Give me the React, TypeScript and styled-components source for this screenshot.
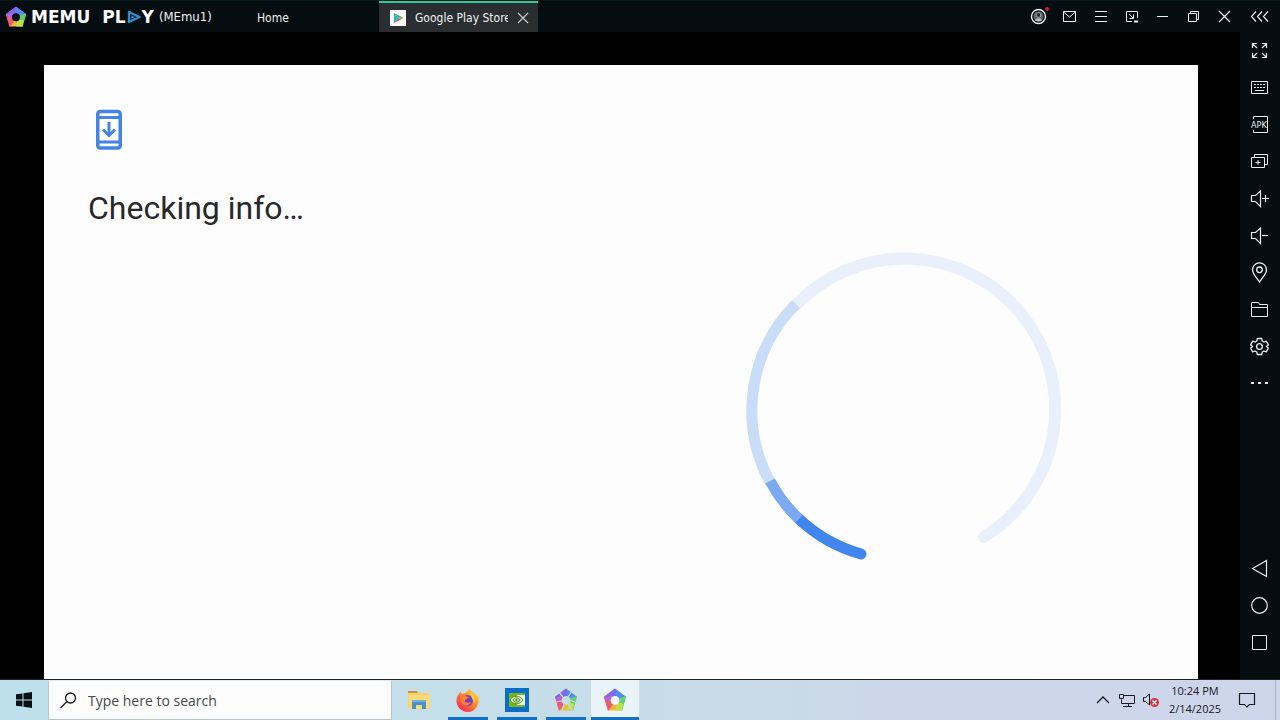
import React from "react";
import styled, { createGlobalStyle } from "styled-components";

const ui = '"DejaVu Sans Condensed", "DejaVu Sans", sans-serif';
const win = '"Open Sans", "Noto Sans", sans-serif';

const GlobalStyle = createGlobalStyle`
  *, *::before, *::after { box-sizing: border-box; }
  body { margin: 0; background: #000; }
  button, input { font: inherit; color: inherit; border: 0; margin: 0; padding: 0; background: none; }
`;

const Desktop = styled.div`
  display: flex;
  flex-direction: column;
  min-height: 100vh;
  background: #000;
`;

const TitleBar = styled.header`
  display: flex;
  align-items: stretch;
  height: 32px;
  background: #060d10;
  border-top: 1px solid #04191a;
  color: #eef1f2;
  font-family: ${ui};
  font-size: 12px;
`;

const Brand = styled.div`
  display: flex;
  align-items: center;
  width: 240px;
  padding-left: 5px;
`;

const WordMark = styled.div`
  display: flex;
  align-items: center;
  gap: 1px;
  margin: 0 5px 0 4px;
  color: #fff;
  font-family: "DejaVu Sans", sans-serif;
  font-size: 17px;
  font-weight: 700;
  line-height: 20px;
`;

const Word = styled.span<{ $gap?: number }>`
  margin-left: ${(p) => p.$gap ?? 0}px;
`;

const InstanceName = styled.span`
  font-size: 13px;
`;

const HomeTab = styled.button`
  width: 139px;
  padding: 2px 0 0 17px;
  text-align: left;
`;

const AppTab = styled.div`
  display: flex;
  align-items: center;
  width: 159px;
  padding-left: 11px;
  background: #2a2e30;
  border-top: 2px solid #2fc79c;
`;

const TabLabel = styled.button`
  flex: none;
  width: 93px;
  margin-left: 9px;
  overflow: hidden;
  white-space: nowrap;
  text-align: left;
`;

const TabClose = styled.button`
  display: flex;
  margin-left: 9px;
  color: #c9cdcf;
`;

const Controls = styled.div`
  display: flex;
  margin-left: auto;
`;

const ControlButton = styled.button<{ $wide?: boolean }>`
  display: flex;
  align-items: center;
  justify-content: center;
  width: ${(p) => (p.$wide ? 40 : 31)}px;
`;

const Workspace = styled.div`
  display: flex;
  flex: 1;
`;

const Stage = styled.main`
  display: flex;
  flex: 1;
  padding: 33px 42px 0 44px;
`;

const Screen = styled.section`
  display: flex;
  flex: 1;
  background: #fdfdfd;
`;

const Message = styled.div`
  flex: 1;
  padding: 44px 0 0 44px;
`;

const Heading = styled.h1`
  margin: 33px 0 0;
  color: #27282a;
  font-family: Roboto, sans-serif;
  font-size: 32px;
  font-weight: 400;
  line-height: 40px;
`;

const Progress = styled.div`
  display: flex;
  flex: 1;
  justify-content: center;
  padding: 186px 23px 0 0;
`;

const SideBar = styled.aside`
  display: flex;
  flex-direction: column;
  width: 40px;
  padding-bottom: 18px;
  background: #050c12;
  color: #e9edef;
`;

const SideButton = styled.button<{ $push?: boolean }>`
  display: flex;
  align-items: center;
  justify-content: center;
  height: 37px;
  margin-top: ${(p) => (p.$push ? "auto" : "0")};
`;

const TaskBar = styled.footer`
  display: flex;
  height: 41px;
  border-top: 1px solid #1c2226;
  background: linear-gradient(90deg, #bde0ec 0%, #c4dfe9 32%, #c9dbe8 55%, #cdd7ea 75%, #cdd5ea 100%);
  color: #16181c;
  font-family: ${win};
`;

const StartButton = styled.button`
  display: flex;
  align-items: center;
  justify-content: center;
  width: 48px;
`;

const SearchBox = styled.label`
  display: flex;
  align-items: center;
  width: 344px;
  padding-left: 11px;
  border: 1px solid #b9c4ca;
  border-top-color: #e4eaed;
  background: #fdfdfd;
`;

const SearchInput = styled.input`
  flex: 1;
  min-width: 0;
  margin-left: 11px;
  padding-top: 2px;
  outline: none;
  font-size: 14px;
  line-height: 20px;
  &::placeholder { color: #45484b; opacity: 1; }
`;

const TaskList = styled.nav`
  display: flex;
  gap: 1px;
  margin-left: 3px;
`;

const TaskButton = styled.button<{ $state?: "running" | "active" }>`
  display: flex;
  flex-direction: column;
  align-items: center;
  justify-content: space-between;
  width: 48px;
  padding-top: 8px;
  background: ${(p) => (p.$state === "active" ? "#eaf3f7" : "transparent")};
  &::after {
    content: "";
    width: ${(p) => (p.$state === "active" ? 48 : 40)}px;
    height: 3px;
    background: ${(p) => (p.$state ? "#0f70c6" : "transparent")};
  }
`;

const Tray = styled.div`
  display: flex;
  margin-left: auto;
`;

const TrayButton = styled.button<{ $wide?: boolean }>`
  display: flex;
  align-items: center;
  justify-content: center;
  width: ${(p) => (p.$wide ? 40 : 24)}px;
`;

const Clock = styled.button`
  width: 64px;
  padding-bottom: 1px;
  font-size: 11px;
  line-height: 18px;
  text-align: center;
`;

const ShowDesktop = styled.button`
  width: 5px;
  margin-left: 8px;
  border-left: 1px solid #a3afc2;
`;

const Line = styled.svg`
  display: block;
  flex: none;
  fill: none;
  stroke: currentColor;
  stroke-width: 1;
`;

type IconProps = { children: React.ReactNode };
const BarIcon = ({ children }: IconProps) => (
  <Line width="21" height="21" viewBox="0 1 21 21" aria-hidden="true">{children}</Line>
);
const SideIcon = ({ children }: IconProps) => (
  <Line width="20" height="21" viewBox="0 0 20 21" aria-hidden="true">{children}</Line>
);

const Pentagon = ({ size, hole, cut }: { size: number; hole: string; cut?: boolean }) => (
  <svg width={size} height={size} viewBox="0 0 24 24" aria-hidden="true">
    <g strokeWidth="1.6" strokeLinejoin="round">
      <path d="M12 12 12 1.5 22.2 9.2Z" fill="#4f8df0" stroke="#4f8df0" />
      <path d="M12 12 22.2 9.2 18.6 21.6Z" fill="#62cf72" stroke="#62cf72" />
      <path d="M12 12 18.6 21.6 5.4 21.6Z" fill="#f6b43c" stroke="#f6b43c" />
      <path d="M12 12 5.4 21.6 1.8 9.2Z" fill="#ee5a6e" stroke="#ee5a6e" />
      <path d="M12 12 1.8 9.2 12 1.5Z" fill="#8168e6" stroke="#8168e6" />
    </g>
    <path d="M12 22.4 18.6 22.4 20.5 16 15 14Z" fill="#bfe04c" />
    <path d="M1.2 10 9 7 7 14Z" fill="#b565dc" />
    {cut && (
      <path d="M4 3 9 9M1 14 8 13M8 23 10 16M18 23 14 15M23 15 16 12M18 3 14 9" stroke="#c4dfe9" strokeWidth="1.2" />
    )}
    <circle cx="12" cy="12.4" r="4.4" fill={hole} />
  </svg>
);

const Speaker = ({ plus }: { plus?: boolean }) => (
  <SideIcon>
    <path d="M1.5 7.5H5.5L10.5 3V18.5L5.5 13.5H1.5Z" strokeWidth="1.2" />
    <path d={plus ? "M12 10.5H19M15.5 7V14" : "M12 10.5H18"} strokeWidth="1.2" />
  </SideIcon>
);

const controls: [string, React.ReactNode][] = [
  ["Account", (
    <>
      <circle cx="10.5" cy="11.5" r="7" strokeWidth="1.4" />
      <circle cx="10.5" cy="11.5" r="5" fill="#5d6467" stroke="none" />
      <circle cx="10.5" cy="10" r="2.4" fill="#24292c" stroke="#b9bfc2" strokeWidth="0.8" />
      <path d="M6.5 15Q10.5 11.5 14.5 15Q10.5 18 6.5 15Z" fill="#b9bfc2" stroke="none" />
      <circle cx="19" cy="4" r="2" fill="#d8173f" stroke="none" />
    </>
  )],
  ["Messages", <><path d="M4.5 6.5H16.5V16.5H4.5Z" /><path d="M4.5 7 10.5 12 16.5 7" /></>],
  ["Menu", <path d="M5 6.5H17M5 11.5H17M5 16.5H17" />],
  ["Compact window", <><path d="M16.5 13V6.5H5.5V16.5H11" /><path d="M8 9 12 13M12.5 9.5V13.5H8.5" /><path d="M13 16.5H17" strokeWidth="2" /></>],
  ["Minimize", <path d="M5 11.5H16" />],
  ["Restore", <><path d="M5.5 8.5H13.5V16.5H5.5Z" /><path d="M7.5 8.5V6.5H15.5V14.5H13.5" /></>],
  ["Close", <path d="M5 6 16 17M16 6 5 17" strokeWidth="1.2" />],
];

const tools: [string, React.ReactNode][] = [
  ["Full screen", (
    <SideIcon>
      <path d="M2.5 8V3.5H7M2.5 3.5 7 8M12 3.5H16.5V8M16.5 3.5 12 8M2.5 13V17.5H7M2.5 17.5 7 13M16.5 13V17.5H12M16.5 17.5 12 13" strokeWidth="1.2" />
    </SideIcon>
  )],
  ["Keyboard", (
    <SideIcon>
      <path d="M1.5 4.5H17.5V16.5H1.5Z" />
      <path d="M4 7.5H16M4 10.5H16" strokeDasharray="2 1" />
      <path d="M5 13.5H14" />
    </SideIcon>
  )],
  ["Install APK", (
    <SideIcon>
      <path d="M3.5 5V2.5H17.5V18.5H3.5V16" />
      <text x="1" y="14" fontFamily="DejaVu Sans Condensed, sans-serif" fontSize="9" fill="currentColor" stroke="none">APK</text>
    </SideIcon>
  )],
  ["Multi-instance", (
    <SideIcon>
      <path d="M1.5 6.5H14.5V16.5H1.5Z" />
      <path d="M4.5 6.5V3.5H17.5V13.5H14.5" />
      <path d="M5.5 11.5H10.5M8 9V14" />
    </SideIcon>
  )],
  ["Volume up", <Speaker plus />],
  ["Volume down", <Speaker />],
  ["Location", (
    <SideIcon>
      <path d="M9.5 20C6.5 15.5 2.5 12 2.5 7.8A7 7 0 0 1 16.5 7.8C16.5 12 12.5 15.5 9.5 20Z" strokeWidth="1.3" />
      <circle cx="9.5" cy="7.8" r="2.8" strokeWidth="1.3" />
    </SideIcon>
  )],
  ["Shared folder", (
    <SideIcon><path d="M1.5 17.5V3.5H8.5L9.5 5.5H17.5V17.5ZM1.5 8.5H17.5" /></SideIcon>
  )],
  ["Settings", (
    <SideIcon>
      <path d="M7.3 2.5H11.7L12.2 5 13.9 6 16.3 5.2 18.4 8.8 16.5 10.5 18.4 12.2 16.3 15.8 13.9 15 12.2 16 11.7 18.5H7.3L6.8 16 5.1 15 2.7 15.8 0.6 12.2 2.5 10.5 0.6 8.8 2.7 5.2 5.1 6 6.8 5Z" strokeWidth="1.3" strokeLinejoin="round" />
      <circle cx="9.5" cy="10.5" r="2.9" strokeWidth="1.3" />
    </SideIcon>
  )],
  ["More", (
    <SideIcon><path d="M1 10H4M8 10H11M15 10H18" strokeWidth="2" /></SideIcon>
  )],
];

const navigation: [string, React.ReactNode][] = [
  ["Back", <path d="M2.5 10.5 16.5 2.5V18.5Z" strokeWidth="1.2" />],
  ["Home", <circle cx="9.5" cy="10.5" r="7.8" strokeWidth="1.2" />],
  ["Recent apps", <path d="M2.5 3.5H16.5V17.5H2.5Z" />],
];

const Spinner = () => (
  <svg width="320" height="316" viewBox="744 250 320 316" fill="none" strokeWidth="12" role="img" aria-label="Loading">
    <path d="M985 536A150.5 150.5 0 1 0 797 304" stroke="#e9f0fc" strokeLinecap="round" />
    <path d="M797 303A150.5 150.5 0 0 0 771 481" stroke="#c9ddf9" strokeWidth="11" />
    <path d="M862 553A150.5 150.5 0 0 1 799 517" stroke="#4285ee" strokeWidth="11" strokeLinecap="round" />
    <path d="M800 518A150.5 150.5 0 0 1 771 480" stroke="#7baaf3" strokeWidth="11" />
  </svg>
);

const PhoneUpdate = () => (
  <svg width="42" height="42" viewBox="0 0 42 42" fill="none" stroke="#4482e4" aria-hidden="true">
    <rect x="9.75" y="2.5" width="22.5" height="36.5" rx="2.5" strokeWidth="3.5" />
    <path d="M10 8.5H32M10 33H32" strokeWidth="3" />
    <path d="M21 13V25" strokeWidth="3" />
    <path d="M15 20.5 21 26.5 27 20.5" strokeWidth="3" />
  </svg>
);

const Explorer = () => (
  <svg width="24" height="24" viewBox="0 0 24 24" aria-hidden="true">
    <path d="M1 3H10L12 5H22V20H1Z" fill="#f7d06b" />
    <path d="M1 3H10L11 5H1Z" fill="#c59a3e" />
    <path d="M2 7H23V21H2Z" fill="#fbd978" />
    <path d="M5 21V12H19V21H15V17H9V21Z" fill="#4b8fc9" />
    <path d="M5 12H19V14H5Z" fill="#6fb0dd" />
  </svg>
);

const Firefox = () => (
  <svg width="24" height="24" viewBox="0 0 24 24" aria-hidden="true">
    <defs>
      <linearGradient id="flame" x1="0.85" y1="0.1" x2="0.2" y2="0.9">
        <stop offset="0" stopColor="#ffd83c" />
        <stop offset="0.45" stopColor="#ff8a2b" />
        <stop offset="1" stopColor="#f0304f" />
      </linearGradient>
    </defs>
    <path d="M3 6 4.5 3.5 6 6 9 5C11 5 11 2 14 0.5 14 3 19 5 21 8L22 7C25 15 20 24 12 24 4 24 -2 16 1.5 8Z" fill="url(#flame)" />
    <circle cx="11.5" cy="12.5" r="5.5" fill="#7a3fc0" />
    <path d="M4 7C8 6 9 9 13 9 11 11 10 11 9 12 8 14 11 16 15 14 14 18 7 19 5 14Z" fill="#ff7d32" />
    <path d="M15 4C19 7 20 11 18 15 17 10 14 9 15 4Z" fill="#ffc93c" />
  </svg>
);

const Nvidia = () => (
  <svg width="24" height="24" viewBox="0 0 24 24" aria-hidden="true">
    <path d="M0 0H24V24H0Z" fill="#0b6cc9" />
    <path d="M4 5H20V19H4Z" fill="#74b81e" />
    <path d="M12 7H20V17H12Z" fill="#f2f8e8" />
    <path d="M5 12C8 7 15 7 18 12 15 17 8 17 5 12Z" fill="#f2f8e8" stroke="#55901a" />
    <path d="M8 12C10 9 13 9 15 12 13 15 10 15 8 12Z" fill="none" stroke="#55901a" strokeWidth="1.2" />
    <circle cx="11.5" cy="12" r="1.2" fill="#55901a" />
  </svg>
);

export default function App() {
  return (
    <Desktop>
      <GlobalStyle />
      <TitleBar>
        <Brand>
          <Pentagon size={22} hole="#060d10" />
          <WordMark>
            <Word>MEMU</Word>
            <Word $gap={11}>PL</Word>
            <svg width="14" height="14" viewBox="0 0 14 14" fill="none" role="img" aria-label="A">
              <path d="M2 2 12.5 7 2 12Z" stroke="#2391cf" strokeWidth="2.4" strokeLinejoin="round" />
              <path d="M4.5 5.5 8 7 4.5 8.5Z" fill="#2391cf" />
            </svg>
            <Word>Y</Word>
          </WordMark>
          <InstanceName>(MEmu1)</InstanceName>
        </Brand>
        <HomeTab type="button">Home</HomeTab>
        <AppTab>
          <svg width="16" height="16" viewBox="0 0 16 16" aria-hidden="true">
            <path d="M0 0H16V16H0Z" fill="#fbfbfb" />
            <path d="M4 3V13L9 8Z" fill="#28b8c8" />
            <path d="M4 3 9 8 11 6.5Z" fill="#2fb673" />
            <path d="M4 13 9 8 11 9.5Z" fill="#d9584e" />
            <path d="M9 8 11 6.5 13 8 11 9.5Z" fill="#8fae4e" />
          </svg>
          <TabLabel type="button">Google Play Store</TabLabel>
          <TabClose type="button" aria-label="Close tab">
            <Line width="12" height="12" viewBox="0 0 12 12"><path d="M1 1 11 11M11 1 1 11" strokeWidth="1.2" /></Line>
          </TabClose>
        </AppTab>
        <Controls>
          {controls.map(([label, art]) => (
            <ControlButton key={label} type="button" aria-label={label}><BarIcon>{art}</BarIcon></ControlButton>
          ))}
          <ControlButton $wide type="button" aria-label="Collapse sidebar">
            <Line width="20" height="21" viewBox="0 1 20 21">
              <path d="M6 6.5 1.5 11.5 6 16.5M12 6.5 7.5 11.5 12 16.5M18 6.5 13.5 11.5 18 16.5" strokeWidth="1.2" />
            </Line>
          </ControlButton>
        </Controls>
      </TitleBar>

      <Workspace>
        <Stage>
          <Screen>
            <Message>
              <PhoneUpdate />
              <Heading>Checking info…</Heading>
            </Message>
            <Progress><Spinner /></Progress>
          </Screen>
        </Stage>
        <SideBar>
          {tools.map(([label, icon]) => (
            <SideButton key={label} type="button" aria-label={label}>{icon}</SideButton>
          ))}
          {navigation.map(([label, art], i) => (
            <SideButton key={label} $push={i === 0} type="button" aria-label={label}><SideIcon>{art}</SideIcon></SideButton>
          ))}
        </SideBar>
      </Workspace>

      <TaskBar>
        <StartButton type="button" aria-label="Start">
          <svg width="16" height="16" viewBox="0 0 16 16" fill="#0a0f14" aria-hidden="true">
            <path d="M0 2.3 6.5 1.4V7.5H0ZM7.5 1.2 16 0V7.5H7.5ZM0 8.5H6.5V14.6L0 13.7ZM7.5 8.5H16V16L7.5 14.8Z" />
          </svg>
        </StartButton>
        <SearchBox>
          <Line width="17" height="17" viewBox="0 0 17 17" aria-hidden="true">
            <circle cx="10.5" cy="6" r="5" strokeWidth="1.3" />
            <path d="M7 9.5 0.5 16" strokeWidth="1.3" />
          </Line>
          <SearchInput type="text" aria-label="Search" placeholder="Type here to search" />
        </SearchBox>
        <TaskList>
          <TaskButton type="button" aria-label="File Explorer"><Explorer /></TaskButton>
          <TaskButton $state="running" type="button" aria-label="Firefox"><Firefox /></TaskButton>
          <TaskButton $state="running" type="button" aria-label="NVIDIA"><Nvidia /></TaskButton>
          <TaskButton $state="running" type="button" aria-label="Multi-MEmu"><Pentagon size={24} hole="#c4dfe9" cut /></TaskButton>
          <TaskButton $state="active" type="button" aria-label="MEmu"><Pentagon size={24} hole="#fdfdfd" /></TaskButton>
        </TaskList>
        <Tray>
          <TrayButton type="button" aria-label="Show hidden icons">
            <Line width="14" height="8" viewBox="0 0 14 8"><path d="M1 7 7 1 13 7" strokeWidth="1.3" /></Line>
          </TrayButton>
          <TrayButton type="button" aria-label="Network">
            <Line width="18" height="16" viewBox="0 0 18 16">
              <path d="M5.5 3.5H16.5V11.5H3.5V7.5M1.5 2.5H5.5V6.5H1.5ZM10.5 11.5V14.5M5 14.5H14" />
            </Line>
          </TrayButton>
          <TrayButton type="button" aria-label="Volume muted">
            <Line width="18" height="16" viewBox="0 0 18 16">
              <path d="M1.5 5.5H3.5L7.5 2V13L3.5 9.5H1.5Z" />
              <circle cx="12.5" cy="10.5" r="4.5" fill="#d8313e" stroke="none" />
              <path d="M10.5 8.5 14.5 12.5M14.5 8.5 10.5 12.5" stroke="#fff" strokeWidth="1.2" />
            </Line>
          </TrayButton>
          <Clock type="button">10:24 PM<br />2/14/2025</Clock>
          <TrayButton $wide type="button" aria-label="Notifications">
            <Line width="18" height="18" viewBox="0 0 18 18">
              <path d="M1.5 2.5H16.5V13.5H11.5L9 16 6.5 13.5H1.5Z" strokeWidth="1.2" />
            </Line>
          </TrayButton>
          <ShowDesktop type="button" aria-label="Show desktop" />
        </Tray>
      </TaskBar>
    </Desktop>
  );
}
